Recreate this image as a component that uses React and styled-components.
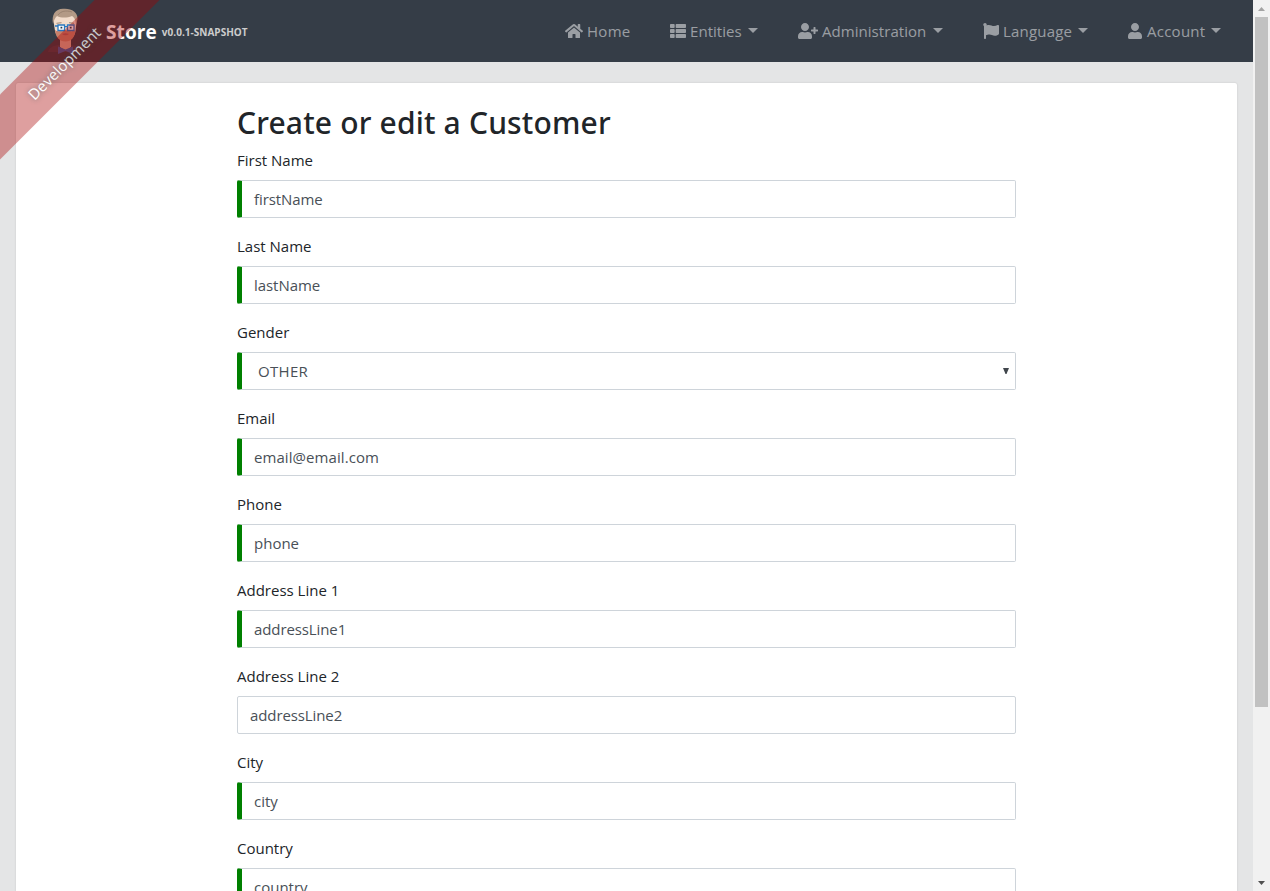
import React from "react";
import styled, { createGlobalStyle } from "styled-components";
import { FaHome, FaThList, FaUserPlus, FaFlag, FaUser } from "react-icons/fa";

const GlobalStyle = createGlobalStyle`
  *, *::before, *::after { box-sizing: border-box; }
  body {
    margin: 0;
    overflow: hidden;
    background: #e4e5e6;
    color: #212529;
    font-family: "Open Sans", sans-serif;
    font-size: 15px;
    line-height: 24px;
  }
`;

const Shell = styled.div`
  display: flex;
  height: 891px;
  overflow: hidden;
`;

const Page = styled.div`
  position: relative;
  flex: 1;
  min-width: 0;
  overflow: hidden;
`;

const Navbar = styled.header`
  display: flex;
  align-items: center;
  justify-content: space-between;
  height: 62px;
  padding: 0 32px 0 48px;
  background: #353d47;
`;

const Brand = styled.div`
  display: flex;
  align-items: center;
  color: #fff;
`;

const Logo = styled.svg`
  display: block;
  width: 35px;
  height: 46px;
  margin-right: 23px;
`;

const BrandName = styled.span`
  padding-top: 2px;
  font-size: 19px;
  font-weight: 700;
  letter-spacing: 0.1px;
`;

const Version = styled.span`
  margin-left: 5px;
  padding-top: 2px;
  font-size: 10px;
  font-weight: 700;
  letter-spacing: 0.02px;
  color: #ccc;
`;

const Nav = styled.nav`
  display: flex;
  gap: 40px;
`;

const NavLink = styled.a`
  display: flex;
  align-items: center;
  color: rgba(255, 255, 255, 0.5);

  svg {
    flex: none;
    width: ${(p) => p.$icon}px;
    height: 16px;
    margin-right: ${(p) => p.$gap}px;
  }
`;

const NavText = styled.span`
  width: ${(p) => p.$width}px;
  white-space: nowrap;
  letter-spacing: ${(p) => p.$track}px;
`;

const Caret = styled.span`
  margin: 0 0 1px 6px;
  border: 5px solid transparent;
  border-top-color: currentColor;
  border-bottom: 0;
`;

const Ribbon = styled.div`
  position: absolute;
  top: 40px;
  left: -56px;
  width: 240px;
  height: 46px;
  line-height: 46px;
  text-align: center;
  color: #fff;
  background: rgba(170, 0, 0, 0.5);
  opacity: 0.75;
  letter-spacing: 0.1px;
  text-shadow: 0 0 5px #444;
  transform: rotate(-45deg);
`;

const Card = styled.main`
  display: flex;
  justify-content: center;
  height: 900px;
  margin: 21px 16px 0;
  padding-top: 22px;
  background: #fff;
  border-radius: 2px;
  box-shadow: 0 0 2px rgba(0, 0, 0, 0.16);
`;

const Form = styled.form`
  width: 779px;
`;

const Title = styled.h2`
  margin: 0 0 7px;
  font-family: "Noto Sans", sans-serif;
  font-size: 30px;
  font-weight: 500;
  line-height: 36px;
  letter-spacing: 0.17px;
`;

const Field = styled.div`
  margin-bottom: 16px;
`;

const Label = styled.label`
  display: block;
  margin-bottom: 8px;
`;

const Control = styled.div`
  display: flex;
  align-items: center;
  justify-content: space-between;
  height: 38px;
  padding: 0 ${(p) => (p.$select ? 6 : 12)}px 0 ${(p) => (p.$select ? 16 : 12)}px;
  color: #495057;
  background: #fff;
  border: 1px solid #ced4da;
  border-left: ${(p) => (p.$valid ? "5px solid green" : "1px solid #ced4da")};
  border-radius: 2px;
  letter-spacing: ${(p) => p.$track || 0}px;
`;

const SelectArrow = styled.svg`
  width: 6px;
  height: 6px;
  fill: #40464c;
`;

const ScrollBar = styled.div`
  display: flex;
  flex-direction: column;
  align-items: center;
  justify-content: space-between;
  width: 17px;
  background: #f1f1f1;
`;

const ScrollButton = styled.div`
  display: flex;
  align-items: center;
  justify-content: center;
  height: 17px;

  svg {
    width: 7px;
    height: 4px;
    fill: ${(p) => p.$color};
  }
`;

const Thumb = styled.div`
  width: 13px;
  height: 690px;
  margin-bottom: auto;
  background: #c1c1c1;
`;

const links = [
  { label: "Home", Icon: FaHome, icon: 18, gap: 4, width: 43, track: 0.3 },
  { label: "Entities", Icon: FaThList, icon: 16, gap: 4, width: 52, track: 0.05, menu: true },
  { label: "Administration", Icon: FaUserPlus, icon: 20, gap: 4, width: 105, track: 0.05, menu: true },
  { label: "Language", Icon: FaFlag, icon: 16, gap: 4, width: 69, track: 0.2, menu: true },
  { label: "Account", Icon: FaUser, icon: 14, gap: 5, width: 58, track: 0.25, menu: true },
];

const fields = [
  { label: "First Name", value: "firstName", valid: true, track: -0.1 },
  { label: "Last Name", value: "lastName", valid: true, track: -0.05 },
  { label: "Gender", value: "OTHER", valid: true, select: true, track: 0.3 },
  { label: "Email", value: "email@email.com", valid: true, track: 0.07 },
  { label: "Phone", value: "phone", valid: true },
  { label: "Address Line 1", value: "addressLine1", valid: true, track: -0.1 },
  { label: "Address Line 2", value: "addressLine2", track: -0.1 },
  { label: "City", value: "city", valid: true },
  { label: "Country", value: "country", valid: true },
];

function Avatar() {
  return (
    <Logo viewBox="0 0 35 46" aria-hidden="true">
      <path d="M0 44c1-4 4-6 10-7h14c6 1 9 3 10 7z" fill="#453f4b" />
      <path d="M12 30h11v9l-5 4-6-4z" fill="#d9a58f" />
      <path d="M5.5 13C5 6 10 3 17 3s12 3 11.500 11l-1 9c-1 6-5 9-10 9s-9-3-10.500-9z" fill="#f2dccb" />
      <path d="M7 22c3 2 5 1 10 0 5 1 7 2 10.500 0-.500 7-4 11.500-10 11.500S7.500 29 7 22z" fill="#c9806a" />
      <path d="M14 26q3.500-1.500 7 0-3.500 2.500-7 0z" fill="#b0605a" />
      <path d="M5 16C3.500 7 7 1 15 .8 23 0 30 4 29.500 11L28 17c0-5-2-8-4-9-5 2-11 2-15 0-2 2-3 4-4 8z" fill="#b39a86" />
      <path d="M10 7C13 3 18 2 24 4" fill="none" stroke="#937c6b" strokeWidth=".8" />
      <path d="M8.500 15.300l5-.600M21 14.700l5 .600" stroke="#a28975" strokeWidth="1" />
      <g fill="#fff" stroke="#2878c0" strokeWidth="1.300">
        <path d="M10 17h6.500v5.500H10zM19.500 17H26v5.500h-6.500z" />
        <path d="M16.500 18.700h3M10 18H7" />
      </g>
      <path d="M12.500 18.700h1.800v1.800h-1.800zM21.800 18.700h1.800v1.800h-1.800z" fill="#23384e" />
      <path d="M10 38.500l7.500 3 7.500-3v7.500l-7.500-3-7.500 3z" fill="#3e5d9c" />
    </Logo>
  );
}

export default function App() {
  return (
    <Shell>
      <GlobalStyle />
      <Page>
        <Navbar>
          <Brand>
            <Avatar />
            <BrandName>Store</BrandName>
            <Version>v0.0.1-SNAPSHOT</Version>
          </Brand>
          <Nav>
            {links.map(({ label, Icon, icon, gap, width, track, menu }) => (
              <NavLink key={label} $icon={icon} $gap={gap}>
                <Icon />
                <NavText $width={width} $track={track}>{label}</NavText>
                {menu && <Caret />}
              </NavLink>
            ))}
          </Nav>
        </Navbar>
        <Card>
          <Form>
            <Title>Create or edit a Customer</Title>
            {fields.map(({ label, value, valid, select, track }) => (
              <Field key={label}>
                <Label>{label}</Label>
                <Control $valid={valid} $select={select} $track={track}>
                  {value}
                  {select && (
                    <SelectArrow viewBox="0 0 6 6">
                      <path d="M0 0h6L3.500 6h-1z" />
                    </SelectArrow>
                  )}
                </Control>
              </Field>
            ))}
          </Form>
        </Card>
        <Ribbon>Development</Ribbon>
      </Page>
      <ScrollBar>
        <ScrollButton $color="#a3a3a3">
          <svg viewBox="0 0 7 4"><path d="M0 4h7L3.500 0z" /></svg>
        </ScrollButton>
        <Thumb />
        <ScrollButton $color="#505050">
          <svg viewBox="0 0 7 4"><path d="M0 0h7L3.500 4z" /></svg>
        </ScrollButton>
      </ScrollBar>
    </Shell>
  );
}
